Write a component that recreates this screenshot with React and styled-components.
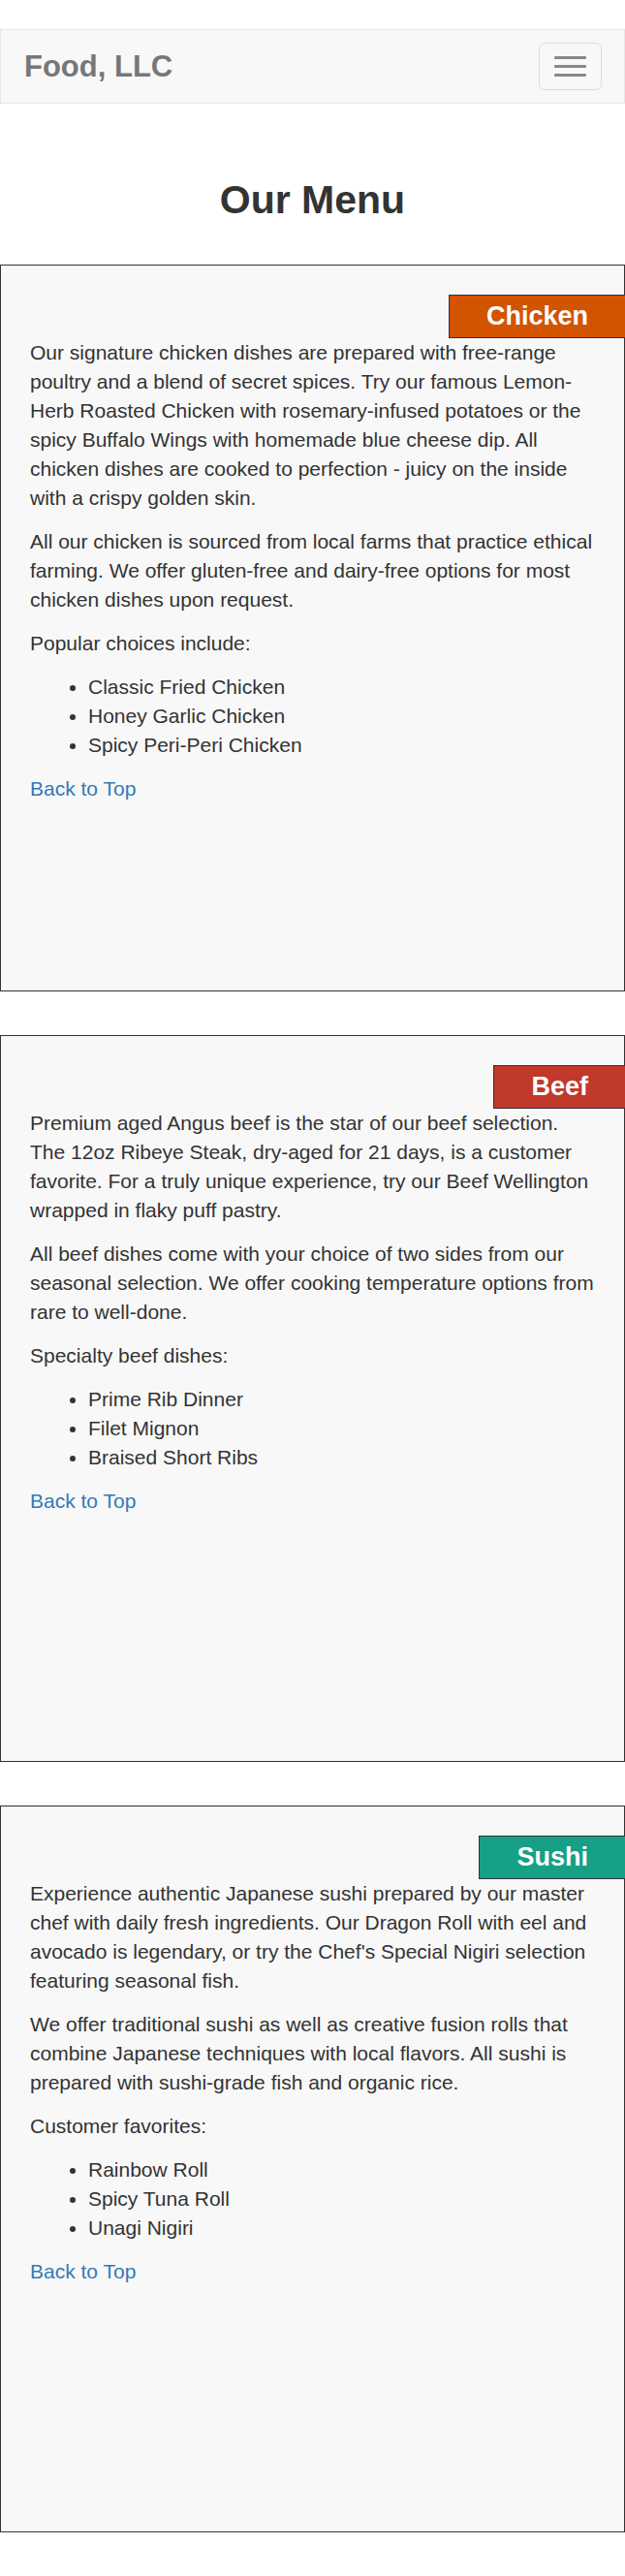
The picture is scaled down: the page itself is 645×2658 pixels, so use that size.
import React from "react";
import styled, { createGlobalStyle } from "styled-components";

const GlobalStyle = createGlobalStyle`
  html, body {
    margin: 0;
    padding: 0;
    background: #ffffff;
  }
  body {
    font-family: "Liberation Sans", Arial, sans-serif;
    font-size: 21px;
    line-height: 30px;
    color: #333333;
  }
  * {
    box-sizing: border-box;
  }
`;

const Page = styled.div`
  padding-top: 30px;
`;

const Navbar = styled.nav`
  display: flex;
  align-items: center;
  justify-content: space-between;
  height: 77px;
  padding: 0 23px 0 24px;
  background: #f8f8f8;
  border: 1px solid #e7e7e7;
`;

const Brand = styled.a`
  font-size: 31px;
  font-weight: bold;
  line-height: 1;
  color: #777777;
  text-decoration: none;
`;

const Toggle = styled.button`
  display: flex;
  flex-direction: column;
  justify-content: center;
  align-items: center;
  gap: 6px;
  width: 65px;
  height: 49px;
  padding: 0;
  background: transparent;
  border: 1px solid #dddddd;
  border-radius: 6px;
`;

const Bar = styled.span`
  display: block;
  width: 33px;
  height: 3px;
  background: #888888;
  border-radius: 1px;
`;

const Title = styled.h2`
  margin: 77px 0 44px;
  font-size: 41px;
  line-height: 45px;
  font-weight: bold;
  text-align: center;
  color: #333333;
`;

const Card = styled.section`
  display: flex;
  flex-direction: column;
  height: 750px;
  margin-bottom: 45px;
  padding: 30px;
  background: #f8f8f8;
  border: 1px solid #333333;
`;

const LabelRow = styled.div`
  display: flex;
  justify-content: flex-end;
  margin-right: -31px;
`;

const Label = styled.h3`
  margin: 0;
  height: 45px;
  padding: 0 38px;
  font-size: 27px;
  line-height: 43px;
  font-weight: bold;
  color: #ffffff;
  background: ${props => props.color};
  border: 1px solid #333333;
  border-right: none;
`;

const Text = styled.p`
  margin: 0 0 15px;
`;

const List = styled.ul`
  margin: 0 0 15px;
  padding-left: 60px;
`;

const TopLink = styled.a`
  color: #337ab7;
  text-decoration: none;
`;

const sections = [
  {
    name: "Chicken",
    color: "#d35400",
    paragraphs: [
      "Our signature chicken dishes are prepared with free-range poultry and a blend of secret spices. Try our famous Lemon-Herb Roasted Chicken with rosemary-infused potatoes or the spicy Buffalo Wings with homemade blue cheese dip. All chicken dishes are cooked to perfection - juicy on the inside with a crispy golden skin.",
      "All our chicken is sourced from local farms that practice ethical farming. We offer gluten-free and dairy-free options for most chicken dishes upon request."
    ],
    intro: "Popular choices include:",
    items: ["Classic Fried Chicken", "Honey Garlic Chicken", "Spicy Peri-Peri Chicken"]
  },
  {
    name: "Beef",
    color: "#c0392b",
    paragraphs: [
      "Premium aged Angus beef is the star of our beef selection. The 12oz Ribeye Steak, dry-aged for 21 days, is a customer favorite. For a truly unique experience, try our Beef Wellington wrapped in flaky puff pastry.",
      "All beef dishes come with your choice of two sides from our seasonal selection. We offer cooking temperature options from rare to well-done."
    ],
    intro: "Specialty beef dishes:",
    items: ["Prime Rib Dinner", "Filet Mignon", "Braised Short Ribs"]
  },
  {
    name: "Sushi",
    color: "#16a085",
    paragraphs: [
      "Experience authentic Japanese sushi prepared by our master chef with daily fresh ingredients. Our Dragon Roll with eel and avocado is legendary, or try the Chef's Special Nigiri selection featuring seasonal fish.",
      "We offer traditional sushi as well as creative fusion rolls that combine Japanese techniques with local flavors. All sushi is prepared with sushi-grade fish and organic rice."
    ],
    intro: "Customer favorites:",
    items: ["Rainbow Roll", "Spicy Tuna Roll", "Unagi Nigiri"]
  }
];

export default function App() {
  return (
    <Page id="top">
      <GlobalStyle />
      <Navbar>
        <Brand href="#top">Food, LLC</Brand>
        <Toggle aria-label="Toggle navigation">
          <Bar />
          <Bar />
          <Bar />
        </Toggle>
      </Navbar>
      <Title>Our Menu</Title>
      {sections.map(section => (
        <Card key={section.name} id={section.name.toLowerCase()}>
          <LabelRow>
            <Label color={section.color}>{section.name}</Label>
          </LabelRow>
          {section.paragraphs.map((text, i) => (
            <Text key={i}>{text}</Text>
          ))}
          <Text>{section.intro}</Text>
          <List>
            {section.items.map(item => (
              <li key={item}>{item}</li>
            ))}
          </List>
          <Text>
            <TopLink href="#top">Back to Top</TopLink>
          </Text>
        </Card>
      ))}
    </Page>
  );
}
